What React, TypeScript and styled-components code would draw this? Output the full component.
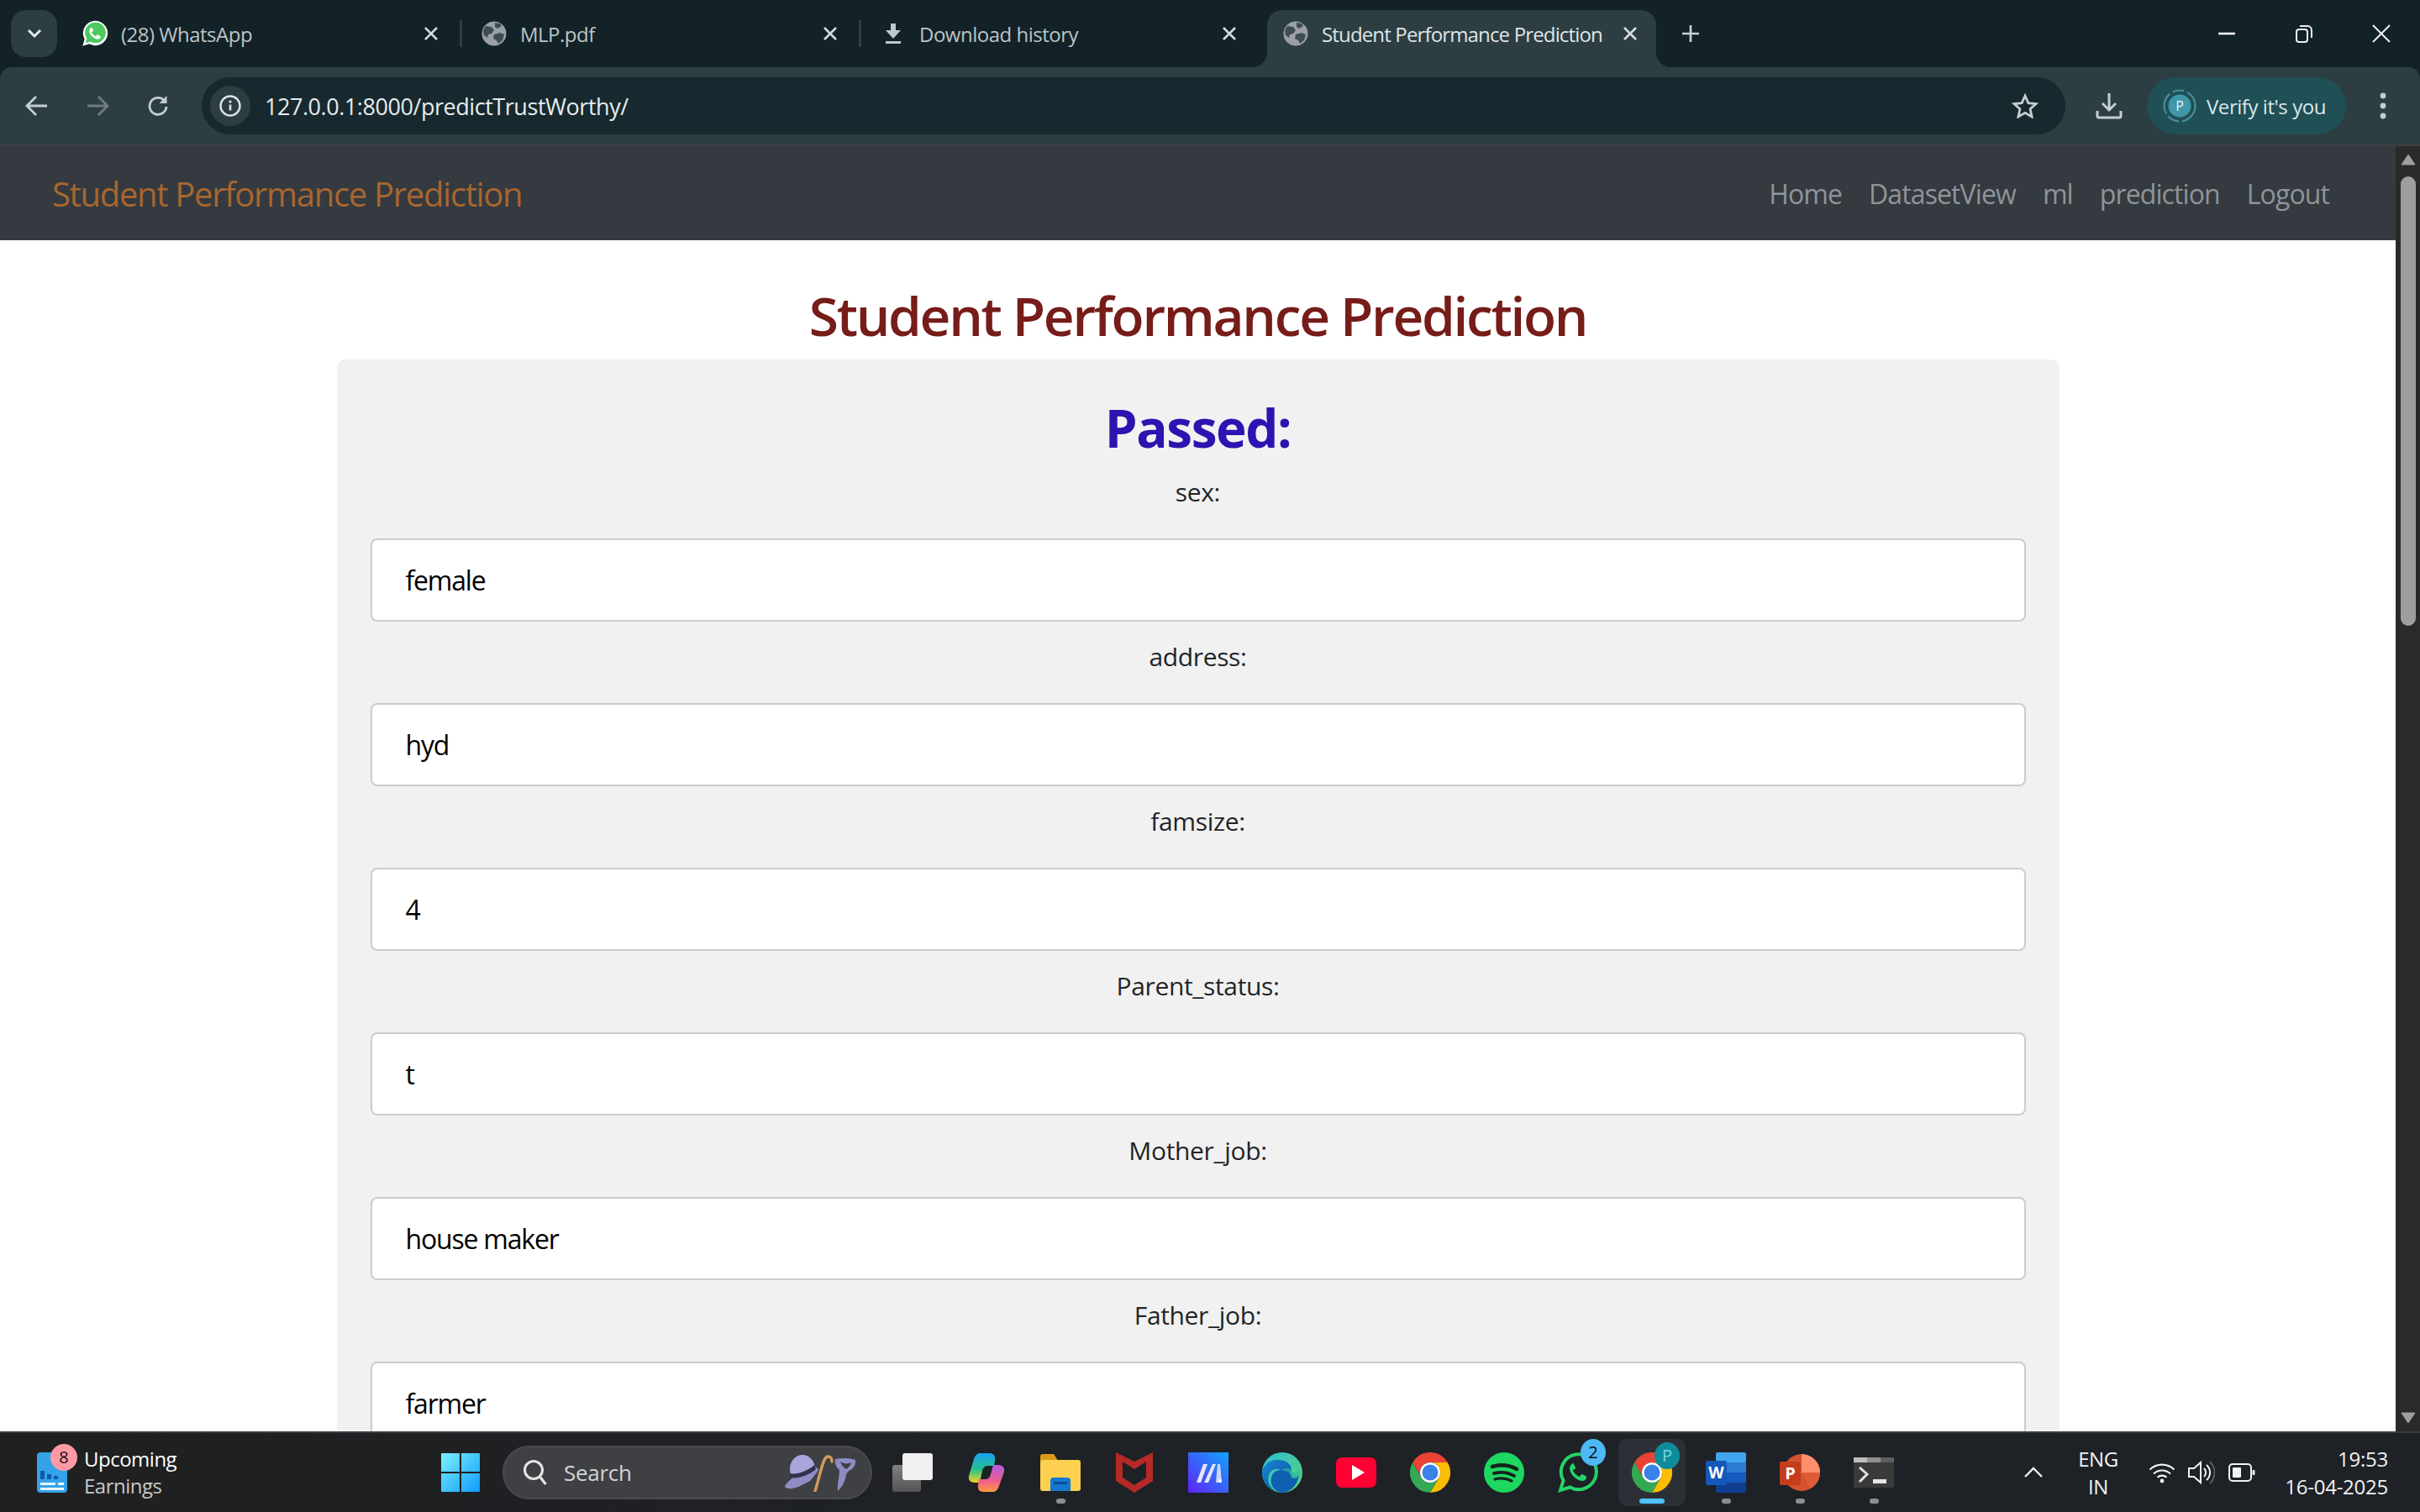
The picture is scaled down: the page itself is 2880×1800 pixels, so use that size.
import React from 'react';
import styled, { createGlobalStyle } from 'styled-components';

const UI_FONT = '"Open Sans", "Noto Sans", "Liberation Sans", sans-serif';

const GlobalStyle = createGlobalStyle`
  html, body {
    margin: 0;
    padding: 0;
    width: 2880px;
    height: 1800px;
    overflow: hidden;
    background: #fff;
    font-family: ${UI_FONT};
  }
  * { box-sizing: border-box; }
`;

const Screen = styled.div`
  width: 2880px;
  height: 1800px;
  display: flex;
  flex-direction: column;
  overflow: hidden;
  background: #122227;
`;

/* ---------- chrome tab strip ---------- */

const TabStrip = styled.div`
  height: 80px;
  flex: none;
  display: flex;
  align-items: flex-start;
  padding: 12px 0 0 13px;
  background: #122227;
`;

const TabSearch = styled.div`
  width: 55px;
  height: 56px;
  margin-right: 7px;
  border-radius: 18px;
  background: #2d3e43;
  display: flex;
  align-items: center;
  justify-content: center;
`;

const Tab = styled.div<{ $active?: boolean; $noSep?: boolean }>`
  position: relative;
  flex: none;
  width: ${p => (p.$active ? 463 : 475)}px;
  height: ${p => (p.$active ? 68 : 56)}px;
  margin-left: ${p => (p.$active ? 8 : 0)}px;
  padding: ${p => (p.$active ? '0 22px 12px 18px' : '0 28px 0 22px')};
  display: flex;
  align-items: center;
  border-radius: ${p => (p.$active ? '18px 18px 0 0' : '0')};
  background: ${p => (p.$active ? '#2d3e43' : 'transparent')};
  color: ${p => (p.$active ? '#dfe5e7' : '#bcc4c7')};

  ${p =>
    p.$active &&
    `
    &::before, &::after {
      content: '';
      position: absolute;
      bottom: 0;
      width: 18px;
      height: 18px;
    }
    &::before { left: -18px; background: radial-gradient(circle at 0 0, transparent 18px, #2d3e43 18.5px); }
    &::after { right: -18px; background: radial-gradient(circle at 100% 0, transparent 18px, #2d3e43 18.5px); }
  `}

  ${p =>
    !p.$active &&
    !p.$noSep &&
    `
    &::after {
      content: '';
      position: absolute;
      right: 0;
      top: 12px;
      width: 3px;
      height: 32px;
      background: #2f4045;
    }
  `}
`;

const TabIcon = styled.div`
  width: 32px;
  height: 32px;
  flex: none;
  display: flex;
  align-items: center;
  justify-content: center;
`;

const TabTitle = styled.span<{ $active?: boolean }>`
  flex: 1;
  margin-left: 15px;
  font-size: 24px;
  letter-spacing: ${p => (p.$active ? -0.85 : -0.5)}px;
  white-space: nowrap;
  overflow: hidden;
`;

const NewTab = styled.div`
  width: 40px;
  height: 56px;
  margin-left: 21px;
  display: flex;
  align-items: center;
  justify-content: center;
`;

const WindowButtons = styled.div`
  margin-left: auto;
  display: flex;
`;

const WindowButton = styled.div`
  width: 92px;
  height: 56px;
  display: flex;
  align-items: center;
  justify-content: center;
`;

/* ---------- chrome toolbar ---------- */

const Toolbar = styled.div`
  height: 94px;
  flex: none;
  display: flex;
  align-items: flex-start;
  padding: 12px 8px 0 8px;
  background: #2d3e43;
  border-radius: 14px 14px 0 0;
  border-bottom: 2px solid #3e4244;
`;

const ToolButton = styled.div<{ $gap?: number }>`
  width: 72px;
  height: 68px;
  flex: none;
  margin-left: ${p => p.$gap ?? 0}px;
  display: flex;
  align-items: center;
  justify-content: center;
`;

const Omnibox = styled.div`
  flex: 1;
  height: 68px;
  margin-left: 16px;
  padding: 0 32px 0 10px;
  display: flex;
  align-items: center;
  border-radius: 34px;
  background: #17292e;
`;

const SiteChip = styled.div`
  width: 48px;
  height: 48px;
  flex: none;
  border-radius: 50%;
  background: #2d3e43;
  display: flex;
  align-items: center;
  justify-content: center;
`;

const UrlText = styled.span`
  margin-left: 17px;
  font-size: 27px;
  letter-spacing: -0.45px;
  color: #e6ecee;
`;

const StarSlot = styled.div`
  margin-left: auto;
  display: flex;
`;

const VerifyPill = styled.div`
  width: 237px;
  height: 68px;
  flex: none;
  margin-left: 9px;
  padding-left: 19px;
  display: flex;
  align-items: center;
  border-radius: 34px;
  background: #204f56;
`;

const VerifyText = styled.span`
  margin-left: 12px;
  font-size: 24px;
  letter-spacing: -0.45px;
  color: #d9e8ea;
  white-space: nowrap;
`;

/* ---------- the page ---------- */

const Viewport = styled.div`
  flex: 1;
  min-height: 0;
  display: flex;
`;

const Page = styled.div`
  flex: 1;
  min-width: 0;
  overflow: hidden;
  background: #fff;
`;

const NavBar = styled.nav`
  height: 112px;
  display: flex;
  align-items: center;
  justify-content: space-between;
  padding: 0 79px 0 62px;
  background: #343a40;
`;

const Brand = styled.span`
  font-size: 40px;
  letter-spacing: -1.32px;
  color: #a8662e;
`;

const NavLinks = styled.div`
  display: flex;
  gap: 32px;
`;

const NavLink = styled.span`
  font-size: 32px;
  letter-spacing: -0.9px;
  color: #8f9498;
`;

const PageTitle = styled.h1`
  height: 142px;
  margin: 0;
  padding-top: 44px;
  text-align: center;
  font-size: 64px;
  line-height: 92px;
  font-weight: 600;
  letter-spacing: -2.3px;
  color: #761c19;
`;

const Card = styled.section`
  width: 2050px;
  margin: 0 auto;
  padding: 36px 40px 0;
  border-radius: 10px;
  background: #f1f1f1;
`;

const Result = styled.h2`
  height: 90px;
  margin: 0;
  text-align: center;
  font-size: 62px;
  line-height: 90px;
  font-weight: 700;
  letter-spacing: -1.45px;
  color: #2b14b0;
`;

const Field = styled.div`
  display: flex;
  flex-direction: column;
`;

const FieldLabel = styled.label`
  height: 97px;
  text-align: center;
  font-size: 30px;
  line-height: 84px;
  letter-spacing: -0.35px;
  color: #212529;
`;

const FirstFieldLabel = styled(FieldLabel)`
  height: 87px;
  line-height: 64px;
`;

const FieldValue = styled.div`
  height: 99px;
  padding-left: 40px;
  display: flex;
  align-items: center;
  border: 2px solid #cccccc;
  border-radius: 8px;
  background: #fff;
  font-size: 32px;
  letter-spacing: -1.2px;
  color: #000;
`;

const ScrollTrack = styled.div`
  width: 29px;
  flex: none;
  display: flex;
  flex-direction: column;
  align-items: center;
  padding: 9px 0 9px;
  background: #2a2a2a;
`;

const ScrollThumb = styled.div`
  width: 18px;
  height: 535px;
  margin-top: 13px;
  border-radius: 9px;
  background: #9e9e9e;
`;

const ScrollDown = styled.div`
  margin-top: auto;
  display: flex;
`;

/* ---------- windows taskbar ---------- */

const Taskbar = styled.footer`
  height: 96px;
  flex: none;
  display: flex;
  align-items: center;
  border-top: 2px solid #3a3c40;
  background: linear-gradient(90deg, #202020 0%, #1e2126 45%, #1e2227 100%);
  color: #fff;
`;

const Widget = styled.div`
  width: 525px;
  flex: none;
  padding-left: 44px;
  display: flex;
  align-items: center;
`;

const WidgetIcon = styled.div`
  position: relative;
  width: 36px;
  height: 48px;
  flex: none;
`;

const WidgetBadge = styled.span`
  position: absolute;
  left: 16px;
  top: -10px;
  width: 32px;
  height: 32px;
  border-radius: 50%;
  background: #ff9aa5;
  color: #111;
  font-size: 20px;
  line-height: 32px;
  text-align: center;
`;

const WidgetText = styled.div`
  margin-left: 20px;
  display: flex;
  flex-direction: column;
`;

const WidgetTitle = styled.span`
  font-size: 24px;
  line-height: 32px;
  letter-spacing: -0.5px;
  color: #fff;
`;

const WidgetSub = styled.span`
  font-size: 24px;
  line-height: 32px;
  letter-spacing: -0.5px;
  color: #c9c9c9;
`;

const SearchBox = styled.div`
  width: 440px;
  height: 64px;
  flex: none;
  margin-left: 27px;
  padding: 0 14px 0 22px;
  display: flex;
  align-items: center;
  border: 2px solid #4a4b4f;
  border-radius: 32px;
  background: #3f4044;
`;

const SearchText = styled.span`
  margin-left: 19px;
  font-size: 26px;
  letter-spacing: -0.3px;
  color: #d4d4d4;
`;

const SearchArt = styled.div`
  margin-left: auto;
  display: flex;
`;

const Apps = styled.div`
  margin-left: 4px;
  display: flex;
  flex: none;
`;

const AppSlot = styled.div<{ $active?: boolean }>`
  position: relative;
  width: 88px;
  height: 80px;
  display: flex;
  align-items: center;
  justify-content: center;

  ${p =>
    p.$active &&
    `
    &::before {
      content: '';
      position: absolute;
      top: 0;
      bottom: 0;
      left: 4px;
      right: 4px;
      border-radius: 10px;
      background: #2c3036;
    }
  `}
  & > svg { position: relative; }
`;

const RunDot = styled.span<{ $active?: boolean }>`
  position: absolute;
  left: 50%;
  bottom: 3px;
  width: ${p => (p.$active ? 30 : 11)}px;
  height: 6px;
  margin-left: ${p => (p.$active ? -15 : -5.5)}px;
  border-radius: 3px;
  background: ${p => (p.$active ? '#4cc2ff' : '#8b8d90')};
`;

const CountBadge = styled.span<{ $bg: string; $color: string; $top: number }>`
  position: absolute;
  right: 11px;
  top: ${p => p.$top}px;
  width: 30px;
  height: 32px;
  border-radius: 50%;
  background: ${p => p.$bg};
  color: ${p => p.$color};
  font-size: 20px;
  line-height: 32px;
  text-align: center;
`;

const Tray = styled.div`
  width: 472px;
  margin-left: auto;
  padding-right: 38px;
  flex: none;
  display: flex;
  align-items: center;
`;

const TrayIcon = styled.div<{ $gap: number }>`
  margin-left: ${p => p.$gap}px;
  display: flex;
  flex: none;
`;

const Lang = styled.div`
  width: 50px;
  margin-left: 40px;
  text-align: center;
  font-size: 24px;
  line-height: 33px;
  color: #f2f2f2;
  letter-spacing: -0.4px;
`;

const Clock = styled.div`
  margin-left: auto;
  text-align: right;
  font-size: 24px;
  line-height: 33px;
  color: #f2f2f2;
  letter-spacing: -0.25px;
`;

/* ---------- drawings ---------- */

const Globe = () => (
  <svg width="30" height="30" viewBox="0 0 30 30">
    <circle cx="15" cy="15" r="14.5" fill="#9aa0a6" />
    <path d="M5 6l7 1 3 4-3 4-4 1-1 4-4-3-1-6z" fill="#2d3e43" opacity=".85" />
    <path d="M15 16l7-2 5 2-2 7-5 4-2-4-4-2z" fill="#2d3e43" opacity=".85" />
    <path d="M16 2l6 1 2 3-5 3-3-2z" fill="#2d3e43" opacity=".85" />
  </svg>
);

const CloseX = () => (
  <svg width="18" height="18" viewBox="0 0 18 18">
    <path d="M2 2l14 14M16 2L2 16" stroke="#d6dcde" strokeWidth="2.6" />
  </svg>
);

const PHONE =
  'M17 14c-1 0-3 2-3 5 0 4 3 8 5 10 3 3 7 5 10 5 3 0 5-2 5-4 0-1 0-1-1-2l-4-2c-1 0-1 0-2 1l-1 2c-1 0-3-1-5-3s-3-4-3-5l2-1c1-1 1-1 1-2l-2-4c0-1-1-1-2-1z';

const WhatsAppTab = () => (
  <svg width="32" height="32" viewBox="0 0 48 48">
    <path d="M2 46l3.500-12A22 22 0 1 1 14 42.500z" fill="#fff" />
    <path d="M7 41l2.500-8A18.500 18.500 0 1 1 16 38.800z" fill="#4fc85f" />
    <path d={PHONE} fill="#fff" />
  </svg>
);

const WhatsAppBar = () => (
  <svg width="48" height="50" viewBox="0 0 48 48">
    <path d="M3 45l3.500-11.500A21 21 0 1 1 14.500 41.500z" fill="none" stroke="#25d366" strokeWidth="4" />
    <path d={PHONE} fill="#25d366" />
  </svg>
);

const Chrome = () => (
  <svg width="48" height="48" viewBox="0 0 48 48">
    <path d="M44.800 12A24 24 0 0 0 3.200 12L13.600 30A12 12 0 0 1 24 12Z" fill="#ea4335" />
    <path d="M24 48A24 24 0 0 0 44.800 12L24 12A12 12 0 0 1 34.400 30Z" fill="#fbbc04" />
    <path d="M3.200 12A24 24 0 0 0 24 48L34.400 30A12 12 0 0 1 13.600 30Z" fill="#34a853" />
    <circle cx="24" cy="24" r="12" fill="#fff" />
    <circle cx="24" cy="24" r="9.500" fill="#3b82e8" />
  </svg>
);

const TaskView = () => (
  <svg width="48" height="46" viewBox="0 0 48 46">
    <defs>
      <linearGradient id="tvG" x1="0" y1="0" x2="0" y2="1">
        <stop offset="0" stopColor="#808080" />
        <stop offset="1" stopColor="#555" />
      </linearGradient>
    </defs>
    <rect x="0" y="14" width="34" height="32" rx="3" fill="url(#tvG)" />
    <rect x="12" y="0" width="36" height="32" rx="3" fill="#f1f1f1" />
  </svg>
);

const Copilot = () => (
  <svg width="44" height="48" viewBox="0 0 44 48">
    <defs>
      <linearGradient id="cpA" x1="0" y1="0" x2="0" y2="1">
        <stop offset="0" stopColor="#1aa0f0" />
        <stop offset=".55" stopColor="#25c28d" />
        <stop offset="1" stopColor="#f4d21f" />
      </linearGradient>
      <linearGradient id="cpB" x1="0" y1="0" x2="0" y2="1">
        <stop offset="0" stopColor="#b35be0" />
        <stop offset=".6" stopColor="#ef5f8b" />
        <stop offset="1" stopColor="#ff9a3c" />
      </linearGradient>
    </defs>
    <path d="M14 1h12c5 0 7 4 6 9l-1 6H24c-4 0-6 2-7 6l-3 14H8c-5 0-8-3-7-8l6-20c2-5 4-7 7-7z" fill="url(#cpA)" />
    <path d="M30 47H18c-5 0-7-4-6-9l1-6h7c4 0 6-2 7-6l3-11h6c5 0 8 3 7 8l-6 17c-2 5-4 7-7 7z" fill="url(#cpB)" />
  </svg>
);

const Folder = () => (
  <svg width="48" height="44" viewBox="0 0 48 44">
    <path d="M0 3a3 3 0 0 1 3-3h13l4 6v8H0z" fill="#d99a18" />
    <rect x="0" y="7" width="48" height="37" rx="3" fill="#fdd04f" />
    <path d="M12 44V32a4 4 0 0 1 4-4h16a4 4 0 0 1 4 4v12z" fill="#1478d0" />
    <rect x="16" y="33" width="16" height="3" fill="#0b4f96" />
  </svg>
);

const McAfee = () => (
  <svg width="44" height="48" viewBox="0 0 44 48">
    <path d="M0 0l22 11L44 0v34L22 48 0 34zM8 11v19l14 9 14-9V11L22 20z" fill="#b52a26" />
  </svg>
);

const MaApp = () => (
  <svg width="48" height="48" viewBox="0 0 48 48">
    <defs>
      <linearGradient id="maG" x1="1" y1="0" x2="0" y2="1">
        <stop offset="0" stopColor="#10a5ff" />
        <stop offset="1" stopColor="#5f22f5" />
      </linearGradient>
    </defs>
    <rect width="48" height="48" fill="url(#maG)" />
    <path d="M18 14h5l-8 22h-5zM29 14h4l-9 22h-5z" fill="#e6e6ff" />
    <path d="M35 14h3l2 22h-7z" fill="#cfd6ff" />
    <circle cx="38" cy="34" r="2" fill="#fff" />
  </svg>
);

const Edge = () => (
  <svg width="48" height="48" viewBox="0 0 48 48">
    <defs>
      <linearGradient id="edA" x1="0" y1="0" x2="1" y2="1">
        <stop offset="0" stopColor="#2fc0d8" />
        <stop offset="1" stopColor="#58d36e" />
      </linearGradient>
      <linearGradient id="edB" x1="0" y1="0" x2="1" y2="1">
        <stop offset="0" stopColor="#1a88d8" />
        <stop offset="1" stopColor="#0a4e9c" />
      </linearGradient>
    </defs>
    <circle cx="24" cy="24" r="24" fill="url(#edA)" />
    <path d="M0 24C2 12 14 6 26 10c8 3 10 9 8 13-2 5-8 4-9 1-3-6-14-6-17 3-3 10 4 21 16 21C11 48 0 37 0 24z" fill="url(#edB)" />
    <path d="M21 21c6-3 13 0 14 6 1 4 6 3 9 0-1 9-8 20-20 21-10-1-15-10-13-18 2-7 6-8 10-9z" fill="#0f5fb0" />
    <path d="M22 22c6-2 11 2 12 6 1 5 7 4 10 0 3-8 0-6 0-6-3 4-8 3-10-1-2-3-8-3-12 1z" fill="#2fb5a0" opacity=".7" />
  </svg>
);

const YouTube = () => (
  <svg width="48" height="36" viewBox="0 0 48 36">
    <rect width="48" height="36" rx="7" fill="#ff0033" />
    <path d="M19 9l15 9-15 9z" fill="#fff" />
  </svg>
);

const Spotify = () => (
  <svg width="48" height="48" viewBox="0 0 48 48">
    <circle cx="24" cy="24" r="24" fill="#1ed760" />
    <path d="M10 17c10-3 20-2 29 3" fill="none" stroke="#13231b" strokeWidth="4.500" strokeLinecap="round" />
    <path d="M12 25c8-2 17-1 24 3" fill="none" stroke="#13231b" strokeWidth="3.800" strokeLinecap="round" />
    <path d="M13 32c7-2 14-1 20 2" fill="none" stroke="#13231b" strokeWidth="3.200" strokeLinecap="round" />
  </svg>
);

const Word = () => (
  <svg width="48" height="48" viewBox="0 0 48 48">
    <rect x="12" y="0" width="36" height="12" rx="2" fill="#41a5ee" />
    <rect x="12" y="12" width="36" height="12" fill="#2b7cd3" />
    <rect x="12" y="24" width="36" height="12" fill="#185abd" />
    <rect x="12" y="36" width="36" height="12" rx="2" fill="#103f91" />
    <rect x="0" y="10" width="25" height="29" rx="2" fill="#1558b8" />
    <text x="12.500" y="31" textAnchor="middle" fontSize="19" fontWeight="700" fill="#fff" fontFamily={UI_FONT}>W</text>
  </svg>
);

const PowerPoint = () => (
  <svg width="48" height="48" viewBox="0 0 48 48">
    <circle cx="26" cy="24" r="22" fill="#d35230" />
    <path d="M26 2a22 22 0 0 1 22 22H26z" fill="#ff8f6b" />
    <path d="M26 24h22a22 22 0 0 1-11 19z" fill="#ed6c47" opacity=".4" />
    <rect x="0" y="11" width="25" height="28" rx="2" fill="#c43e1c" />
    <text x="12.500" y="32" textAnchor="middle" fontSize="20" fontWeight="700" fill="#fff" fontFamily={UI_FONT}>P</text>
  </svg>
);

const Terminal = () => (
  <svg width="48" height="36" viewBox="0 0 48 36">
    <rect width="48" height="36" rx="2" fill="#3a3a3a" />
    <rect width="16" height="6" fill="#bdbdbd" />
    <rect x="16" width="16" height="6" fill="#8f8f8f" />
    <rect x="32" width="16" height="6" fill="#5e5e5e" />
    <path d="M7 12l9 8-9 9" fill="none" stroke="#e0e0e0" strokeWidth="3" />
    <rect x="23" y="26" width="16" height="5" fill="#e6e6e6" />
  </svg>
);

const SearchDecor = () => (
  <svg width="88" height="46" viewBox="0 0 88 46">
    <ellipse cx="21" cy="19" rx="15" ry="17" fill="#a9a6dc" />
    <path d="M0 40c2-8 22-20 36-24l4 3C36 32 8 48 0 40z" fill="#8f8cc4" />
    <path d="M6 24c8 2 22-3 29-10l2 5c-8 7-22 12-30 10z" fill="#33314f" />
    <path d="M36 45c4-12 7-28 11-37 3-6 9-5 9 2" fill="none" stroke="#d29a5a" strokeWidth="3.500" strokeLinecap="round" />
    <path d="M60 7c8-2 18-1 24 1 1 6-3 11-8 13l-3 4c-1 8-4 14-10 20-1-8 2-16 2-25-4-3-6-8-5-13z" fill="#8f8cc4" />
    <path d="M66 10c5 3 9 3 13 1-1 4-3 6-6 8-3-2-6-5-7-9z" fill="#3f4044" />
  </svg>
);

const FIELDS: [string, string][] = [
  ['address:', 'hyd'],
  ['famsize:', '4'],
  ['Parent_status:', 't'],
  ['Mother_job:', 'house maker'],
  ['Father_job:', 'farmer'],
];

const App: React.FC = () => (
  <Screen>
    <GlobalStyle />
    <TabStrip>
      <TabSearch>
        <svg width="18" height="12" viewBox="0 0 18 12">
          <path d="M2 2l7 7 7-7" fill="none" stroke="#e6ecee" strokeWidth="3" />
        </svg>
      </TabSearch>
      <Tab>
        <TabIcon><WhatsAppTab /></TabIcon>
        <TabTitle>(28) WhatsApp</TabTitle>
        <CloseX />
      </Tab>
      <Tab>
        <TabIcon><Globe /></TabIcon>
        <TabTitle>MLP.pdf</TabTitle>
        <CloseX />
      </Tab>
      <Tab $noSep>
        <TabIcon>
          <svg width="20" height="24" viewBox="0 0 20 24">
            <path d="M7 0h6v8h6l-9 10L1 8h6zM1 21h18v3H1z" fill="#bccacd" />
          </svg>
        </TabIcon>
        <TabTitle>Download history</TabTitle>
        <CloseX />
      </Tab>
      <Tab $active>
        <TabIcon><Globe /></TabIcon>
        <TabTitle $active>Student Performance Prediction</TabTitle>
        <CloseX />
      </Tab>
      <NewTab>
        <svg width="22" height="22" viewBox="0 0 22 22">
          <path d="M11 1v20M1 11h20" stroke="#c8d2d5" strokeWidth="2.600" />
        </svg>
      </NewTab>
      <WindowButtons>
        <WindowButton>
          <svg width="20" height="4" viewBox="0 0 20 4"><rect width="20" height="2.600" y=".7" fill="#f0f0f0" /></svg>
        </WindowButton>
        <WindowButton>
          <svg width="22" height="22" viewBox="0 0 22 22">
            <rect x="2" y="6" width="13" height="15" rx="3" fill="none" stroke="#f0f0f0" strokeWidth="2" />
            <path d="M6 2h9a5 5 0 0 1 5 5v9" fill="none" stroke="#f0f0f0" strokeWidth="2" />
          </svg>
        </WindowButton>
        <WindowButton>
          <svg width="22" height="22" viewBox="0 0 22 22">
            <path d="M1 1l20 20M21 1L1 21" stroke="#f0f0f0" strokeWidth="2" />
          </svg>
        </WindowButton>
      </WindowButtons>
    </TabStrip>

    <Toolbar>
      <ToolButton>
        <svg width="28" height="26" viewBox="0 0 28 26">
          <path d="M26 13H3M13 2L2 13l11 11" fill="none" stroke="#c3ced1" strokeWidth="2.800" />
        </svg>
      </ToolButton>
      <ToolButton>
        <svg width="28" height="26" viewBox="0 0 28 26">
          <path d="M2 13h23M15 2l11 11-11 11" fill="none" stroke="#6f7d81" strokeWidth="2.800" />
        </svg>
      </ToolButton>
      <ToolButton>
        <svg width="26" height="26" viewBox="0 0 26 26">
          <path d="M21.500 8A10 10 0 1 0 23 14" fill="none" stroke="#c3ced1" strokeWidth="2.800" />
          <path d="M23.500 1v9h-9" fill="#c3ced1" />
        </svg>
      </ToolButton>
      <Omnibox>
        <SiteChip>
          <svg width="26" height="26" viewBox="0 0 26 26">
            <circle cx="13" cy="13" r="11.500" fill="none" stroke="#dce3e5" strokeWidth="2.400" />
            <path d="M13 11.500v7" stroke="#dce3e5" strokeWidth="2.600" />
            <circle cx="13" cy="8" r="1.600" fill="#dce3e5" />
          </svg>
        </SiteChip>
        <UrlText>127.0.0.1:8000/predictTrustWorthy/</UrlText>
        <StarSlot>
          <svg width="32" height="30" viewBox="0 0 32 30">
            <path d="M16 3l3.800 8.600 9.200 1-6.900 6.200 2 9.200-8.100-4.700L7.900 28l2-9.200L3 12.600l9.200-1z" fill="none" stroke="#c3ced1" strokeWidth="2.800" />
          </svg>
        </StarSlot>
      </Omnibox>
      <ToolButton $gap={16}>
        <svg width="32" height="32" viewBox="0 0 32 32">
          <path d="M16 1v20M8 13l8 8 8-8" fill="none" stroke="#c3ced1" strokeWidth="3" />
          <path d="M2 22v6a2 2 0 0 0 2 2h24a2 2 0 0 0 2-2v-6" fill="none" stroke="#c3ced1" strokeWidth="3" />
        </svg>
      </ToolButton>
      <VerifyPill>
        <svg width="40" height="40" viewBox="0 0 40 40">
          <circle cx="20" cy="20" r="18.500" fill="none" stroke="#4a8f99" strokeWidth="2.200" strokeDasharray="26 4 14 4" />
          <circle cx="20" cy="20" r="13.500" fill="#3f97a8" />
          <text x="20" y="26" textAnchor="middle" fontSize="16" fill="#e8f4f6" fontFamily={UI_FONT}>P</text>
        </svg>
        <VerifyText>Verify it's you</VerifyText>
      </VerifyPill>
      <ToolButton $gap={8}>
        <svg width="8" height="32" viewBox="0 0 8 32" fill="#c3ced1">
          <circle cx="4" cy="4" r="3.400" />
          <circle cx="4" cy="16" r="3.400" />
          <circle cx="4" cy="28" r="3.400" />
        </svg>
      </ToolButton>
    </Toolbar>

    <Viewport>
      <Page>
        <NavBar>
          <Brand>Student Performance Prediction</Brand>
          <NavLinks>
            <NavLink>Home</NavLink>
            <NavLink>DatasetView</NavLink>
            <NavLink>ml</NavLink>
            <NavLink>prediction</NavLink>
            <NavLink>Logout</NavLink>
          </NavLinks>
        </NavBar>
        <PageTitle>Student Performance Prediction</PageTitle>
        <Card>
          <Result>Passed:</Result>
          <Field>
            <FirstFieldLabel>sex:</FirstFieldLabel>
            <FieldValue>female</FieldValue>
          </Field>
          {FIELDS.map(([label, value]) => (
            <Field key={label}>
              <FieldLabel>{label}</FieldLabel>
              <FieldValue>{value}</FieldValue>
            </Field>
          ))}
        </Card>
      </Page>
      <ScrollTrack>
        <svg width="18" height="14" viewBox="0 0 18 14"><path d="M9 1l8 12H1z" fill="#9e9e9e" stroke="#9e9e9e" strokeLinejoin="round" /></svg>
        <ScrollThumb />
        <ScrollDown>
          <svg width="18" height="14" viewBox="0 0 18 14"><path d="M9 13L17 1H1z" fill="#9e9e9e" stroke="#9e9e9e" strokeLinejoin="round" /></svg>
        </ScrollDown>
      </ScrollTrack>
    </Viewport>

    <Taskbar>
      <Widget>
        <WidgetIcon>
          <svg width="36" height="48" viewBox="0 0 36 48">
            <rect width="36" height="48" rx="4" fill="#35a3ea" />
            <path d="M4 22h5v10H4zM12 26h5v6h-5zM20 28h5v4h-5z" fill="#0f5aa8" />
            <path d="M4 36h18v3H4zM25 36h7v3h-7zM4 42h28v3H4z" fill="#e8f4fd" />
          </svg>
          <WidgetBadge>8</WidgetBadge>
        </WidgetIcon>
        <WidgetText>
          <WidgetTitle>Upcoming</WidgetTitle>
          <WidgetSub>Earnings</WidgetSub>
        </WidgetText>
      </Widget>
      <svg width="46" height="46" viewBox="0 0 46 46">
        <defs>
          <linearGradient id="winG" x1="0" y1="0" x2="1" y2="1">
            <stop offset="0" stopColor="#7cf0ff" />
            <stop offset="1" stopColor="#0f9bfa" />
          </linearGradient>
        </defs>
        <path d="M1 0h21v22H0V1a1 1 0 0 1 1-1zM24 0h21a1 1 0 0 1 1 1v21H24zM0 24h22v22H1a1 1 0 0 1-1-1zM24 24h22v21a1 1 0 0 1-1 1H24z" fill="url(#winG)" />
      </svg>
      <SearchBox>
        <svg width="30" height="32" viewBox="0 0 30 32">
          <circle cx="13" cy="13" r="10.500" fill="none" stroke="#e4e4e4" strokeWidth="3" />
          <path d="M20.500 21l7 9" stroke="#e4e4e4" strokeWidth="3.200" />
        </svg>
        <SearchText>Search</SearchText>
        <SearchArt><SearchDecor /></SearchArt>
      </SearchBox>
      <Apps>
        <AppSlot><TaskView /></AppSlot>
        <AppSlot><Copilot /></AppSlot>
        <AppSlot><Folder /><RunDot /></AppSlot>
        <AppSlot><McAfee /></AppSlot>
        <AppSlot><MaApp /></AppSlot>
        <AppSlot><Edge /></AppSlot>
        <AppSlot><YouTube /></AppSlot>
        <AppSlot><Chrome /></AppSlot>
        <AppSlot><Spotify /></AppSlot>
        <AppSlot>
          <WhatsAppBar />
          <CountBadge $bg="#4db8f5" $color="#0b0b0b" $top={0}>2</CountBadge>
        </AppSlot>
        <AppSlot $active>
          <Chrome />
          <CountBadge $bg="#0d8c9c" $color="#7fd4df" $top={4}>P</CountBadge>
          <RunDot $active />
        </AppSlot>
        <AppSlot><Word /><RunDot /></AppSlot>
        <AppSlot><PowerPoint /><RunDot /></AppSlot>
        <AppSlot><Terminal /><RunDot /></AppSlot>
      </Apps>
      <Tray>
        <TrayIcon $gap={0}>
          <svg width="24" height="14" viewBox="0 0 24 14">
            <path d="M2 12L12 2l10 10" fill="none" stroke="#f0f0f0" strokeWidth="2.400" />
          </svg>
        </TrayIcon>
        <Lang>ENG<br />IN</Lang>
        <TrayIcon $gap={35}>
          <svg width="32" height="26" viewBox="0 0 32 26" fill="none" stroke="#f2f2f2" strokeWidth="2.200">
            <path d="M1.500 9.500a21 21 0 0 1 29 0M6 14.500a14.500 14.500 0 0 1 20 0M10.500 18.800a8 8 0 0 1 11 0" />
            <circle cx="16" cy="23" r="2.400" fill="#f2f2f2" stroke="none" />
          </svg>
        </TrayIcon>
        <TrayIcon $gap={15}>
          <svg width="32" height="30" viewBox="0 0 32 30" fill="none" stroke="#f2f2f2" strokeWidth="2">
            <path d="M1 10h6l8-7v24l-8-7H1z" />
            <path d="M19 10a7 7 0 0 1 0 10M22 6a12 12 0 0 1 0 18" />
            <path d="M26 2a18 18 0 0 1 0 26" stroke="#5a5c60" />
          </svg>
        </TrayIcon>
        <TrayIcon $gap={16}>
          <svg width="32" height="22" viewBox="0 0 32 22">
            <rect x="1" y="1" width="26" height="20" rx="4" fill="none" stroke="#f2f2f2" strokeWidth="2" />
            <rect x="5" y="5" width="10" height="12" rx="1" fill="#f2f2f2" />
            <rect x="28.500" y="8" width="3" height="6" rx="1" fill="#f2f2f2" />
          </svg>
        </TrayIcon>
        <Clock>19:53<br />16-04-2025</Clock>
      </Tray>
    </Taskbar>
  </Screen>
);

export default App;
